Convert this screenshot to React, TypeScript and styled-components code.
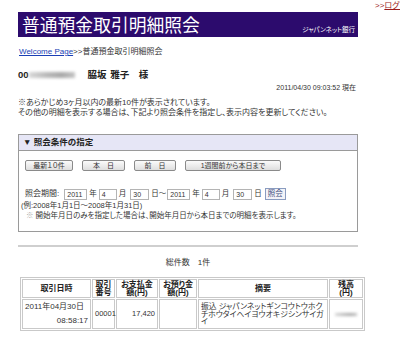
import React from "react";
import styled, { createGlobalStyle } from "styled-components";

const COLORS = {
  purple: "#2c0b6d",
  text: "#333333",
  link: "#1a3fb5",
  logout: "#9b1b1b",
  border: "#9a9a9a",
  lavender: "#e6e6f6",
  cell: "#c9c9c9",
};

const GlobalStyle = createGlobalStyle`
  html, body {
    margin: 0;
    padding: 0;
    background: #ffffff;
    overflow: hidden;
  }
  body {
    font-family: "Liberation Sans", "Noto Sans CJK JP", sans-serif;
    font-feature-settings: "palt";
    color: ${COLORS.text};
  }
`;

const StyledPage = styled.div`
  display: flex;
  padding-left: 18px;
  width: 420px;
`;

const StyledMain = styled.div`
  width: 340px;
  flex-shrink: 0;
  padding-top: 12px;
`;

const StyledSide = styled.div`
  padding-left: 17px;
  padding-top: 1px;
  font-size: 8px;
  line-height: 9px;
  white-space: nowrap;
  color: ${COLORS.logout};
  a {
    color: ${COLORS.logout};
  }
`;

const StyledHeaderBar = styled.header`
  display: flex;
  justify-content: space-between;
  height: 25px;
  background: ${COLORS.purple};
  color: #ffffff;
`;

const StyledTitle = styled.h1`
  margin: 0;
  padding-left: 4px;
  font-size: 17.8px;
  font-weight: 400;
  line-height: 25px;
  font-family: "Noto Sans CJK JP", sans-serif;
`;

const StyledBankName = styled.span`
  align-self: flex-end;
  padding: 0 3px 4px 0;
  font-size: 6.5px;
  line-height: 7px;
`;

const StyledBreadcrumb = styled.nav`
  margin-top: 10px;
  padding-left: 1px;
  font-size: 8px;
  line-height: 10px;
  a {
    color: ${COLORS.link};
  }
`;

const StyledNameRow = styled.div`
  display: flex;
  align-items: center;
  margin-top: 12px;
  font-size: 9.5px;
  font-weight: 700;
  line-height: 12px;
  color: #222;
`;

const StyledBlur = styled.span<{ $w: number; $h: number }>`
  display: inline-block;
  width: ${(p) => p.$w}px;
  height: ${(p) => p.$h}px;
  background: linear-gradient(90deg, #d8d8d8, #b8b8b8 40%, #a8a8a8 70%, #c4c4c4);
  filter: blur(1.6px);
`;

const StyledCustomer = styled.span`
  margin-left: 13px;
  word-spacing: 1px;
`;

const StyledTimestamp = styled.div`
  margin-top: 2px;
  padding-right: 2px;
  text-align: right;
  font-size: 7px;
  line-height: 9px;
`;

const StyledNotes = styled.p`
  margin: 6px 0 0;
  font-size: 8px;
  line-height: 9.5px;
`;

const StyledSearchBox = styled.section`
  margin-top: 17px;
  border: 1px solid ${COLORS.border};
`;

const StyledSearchHeader = styled.div`
  height: 15px;
  padding-left: 4px;
  background: ${COLORS.lavender};
  border-bottom: 1px solid ${COLORS.border};
  font-size: 8.5px;
  font-weight: 700;
  line-height: 15px;
  color: #222;
`;

const StyledSearchBody = styled.div`
  padding: 9px 6px 10px 6px;
`;

const StyledButtonRow = styled.div`
  display: flex;
  gap: 9px;
`;

const StyledButton = styled.button<{ $w: number }>`
  width: ${(p) => p.$w}px;
  height: 11px;
  padding: 0;
  border: 1px solid #8a8a8a;
  border-radius: 2px;
  background: linear-gradient(#fbfbfb, #dedede);
  font-family: inherit;
  font-feature-settings: "palt";
  font-size: 7px;
  line-height: 9px;
  color: #333;
`;

const StyledDateRow = styled.div`
  display: flex;
  align-items: center;
  margin-top: 17px;
  height: 12px;
  font-size: 8px;
  line-height: 10px;
`;

const StyledLabel = styled.span`
  margin-right: 5px;
`;

const StyledInput = styled.span<{ $w: number }>`
  display: inline-block;
  box-sizing: border-box;
  width: ${(p) => p.$w}px;
  height: 11px;
  padding-left: 2px;
  border: 1px solid #b4b4b4;
  font-size: 7px;
  line-height: 9px;
`;

const StyledUnit = styled.span<{ $l?: number; $r?: number }>`
  margin: 0 ${(p) => p.$r ?? 2}px 0 ${(p) => p.$l ?? 2}px;
  font-size: 7.5px;
`;

const StyledQueryButton = styled.button`
  height: 12px;
  width: 21px;
  padding: 0;
  margin-left: 3px;
  border: 1px solid #8a9cc0;
  background: #f3f3f8;
  font-family: inherit;
  font-size: 7.5px;
  line-height: 10px;
  color: #3a4a7a;
`;

const StyledHint = styled.div<{ $indent: number }>`
  margin-left: ${(p) => p.$indent}px;
  font-size: 7.5px;
  line-height: 10px;
`;

const StyledMark = styled.span`
  color: #aaa;
  margin-right: 2px;
`;

const StyledRule = styled.hr`
  margin: 13px 0 0;
  border: 0;
  height: 2px;
  background: #cfcfcf;
`;

const StyledTotal = styled.div`
  margin-top: 11px;
  text-align: center;
  font-size: 8px;
  line-height: 10px;
`;

const StyledTable = styled.table`
  margin: 9px 0 0 2px;
  width: 338px;
  table-layout: fixed;
  border-collapse: separate;
  border-spacing: 1px;
  border: 1px solid ${COLORS.cell};
  font-size: 8px;
  line-height: 8px;
  color: #333;
`;

const StyledTh = styled.th`
  height: 17px;
  padding: 0;
  border: 1px solid ${COLORS.cell};
  font-weight: 700;
  text-align: center;
  color: #222;
`;

const StyledTd = styled.td<{ $align?: string }>`
  height: 26px;
  padding: 1px 2px;
  border: 1px solid ${COLORS.cell};
  font-size: 7.5px;
  text-align: ${(p) => p.$align ?? "left"};
  vertical-align: middle;
`;

const StyledDateTime = styled.div`
  display: flex;
  flex-direction: column;
  gap: 6px;
  font-size: 8px;
  span:last-child {
    text-align: right;
  }
`;

const StyledDesc = styled.div`
  font-size: 7.8px;
  line-height: 7.5px;
  padding-top: 1px;
`;

const columns = [69, 23, 42, 38, 130, 34];

export default function App() {
  return (
    <>
      <GlobalStyle />
      <StyledPage>
        <StyledMain>
          <StyledHeaderBar>
            <StyledTitle>普通預金取引明細照会</StyledTitle>
            <StyledBankName>ジャパンネット銀行</StyledBankName>
          </StyledHeaderBar>

          <StyledBreadcrumb>
            <a href="#">Welcome Page</a>&gt;&gt;普通預金取引明細照会
          </StyledBreadcrumb>

          <StyledNameRow>
            <span>00</span>
            <StyledBlur $w={46} $h={6} />
            <StyledCustomer>脇坂 雅子　様</StyledCustomer>
          </StyledNameRow>

          <StyledTimestamp>2011/04/30 09:03:52 現在</StyledTimestamp>

          <StyledNotes>
            ※あらかじめ3ヶ月以内の最新10件が表示されています。
            <br />
            その他の明細を表示する場合は、下記より照会条件を指定し、表示内容を更新してください。
          </StyledNotes>

          <StyledSearchBox>
            <StyledSearchHeader>▼ 照会条件の指定</StyledSearchHeader>
            <StyledSearchBody>
              <StyledButtonRow>
                <StyledButton $w={48}>最新１０件</StyledButton>
                <StyledButton $w={43}>本　日</StyledButton>
                <StyledButton $w={42}>前　日</StyledButton>
                <StyledButton $w={96}>1週間前から本日まで</StyledButton>
              </StyledButtonRow>

              <StyledDateRow>
                <StyledLabel>照会期間:</StyledLabel>
                <StyledInput $w={23}>2011</StyledInput>
                <StyledUnit>年</StyledUnit>
                <StyledInput $w={18}>4</StyledInput>
                <StyledUnit $r={4}>月</StyledUnit>
                <StyledInput $w={19}>30</StyledInput>
                <StyledUnit $r={1}>日～</StyledUnit>
                <StyledInput $w={23}>2011</StyledInput>
                <StyledUnit>年</StyledUnit>
                <StyledInput $w={18}>4</StyledInput>
                <StyledUnit $r={4}>月</StyledUnit>
                <StyledInput $w={19}>30</StyledInput>
                <StyledUnit $r={0}>日</StyledUnit>
                <StyledQueryButton>照会</StyledQueryButton>
              </StyledDateRow>

              <StyledHint $indent={-4} style={{ marginTop: 1 }}>
                (例:2008年1月1日～2008年1月31日)
              </StyledHint>
              <StyledHint $indent={1}>
                <StyledMark>※</StyledMark>
                開始年月日のみを指定した場合は、開始年月日から本日までの明細を表示します。
              </StyledHint>
            </StyledSearchBody>
          </StyledSearchBox>

          <StyledRule />

          <StyledTotal>総件数　1件</StyledTotal>

          <StyledTable>
            <colgroup>
              {columns.map((w, i) => (
                <col key={i} style={{ width: w }} />
              ))}
            </colgroup>
            <thead>
              <tr>
                <StyledTh>取引日時</StyledTh>
                <StyledTh>
                  取引
                  <br />
                  番号
                </StyledTh>
                <StyledTh>
                  お支払金
                  <br />
                  額(円)
                </StyledTh>
                <StyledTh>
                  お預り金
                  <br />
                  額(円)
                </StyledTh>
                <StyledTh>摘要</StyledTh>
                <StyledTh>
                  残高
                  <br />
                  (円)
                </StyledTh>
              </tr>
            </thead>
            <tbody>
              <tr>
                <StyledTd>
                  <StyledDateTime>
                    <span>2011年04月30日</span>
                    <span>08:58:17</span>
                  </StyledDateTime>
                </StyledTd>
                <StyledTd>00001</StyledTd>
                <StyledTd $align="right">17,420</StyledTd>
                <StyledTd />
                <StyledTd>
                  <StyledDesc>
                    振込 ジャパンネットギンコウトウホクチホウタイヘイヨウオキジシンサイガイ
                  </StyledDesc>
                </StyledTd>
                <StyledTd $align="center">
                  <StyledBlur $w={22} $h={3} />
                </StyledTd>
              </tr>
            </tbody>
          </StyledTable>
        </StyledMain>

        <StyledSide>
          &gt;&gt;<a href="#">ログアウト</a>
        </StyledSide>
      </StyledPage>
    </>
  );
}
